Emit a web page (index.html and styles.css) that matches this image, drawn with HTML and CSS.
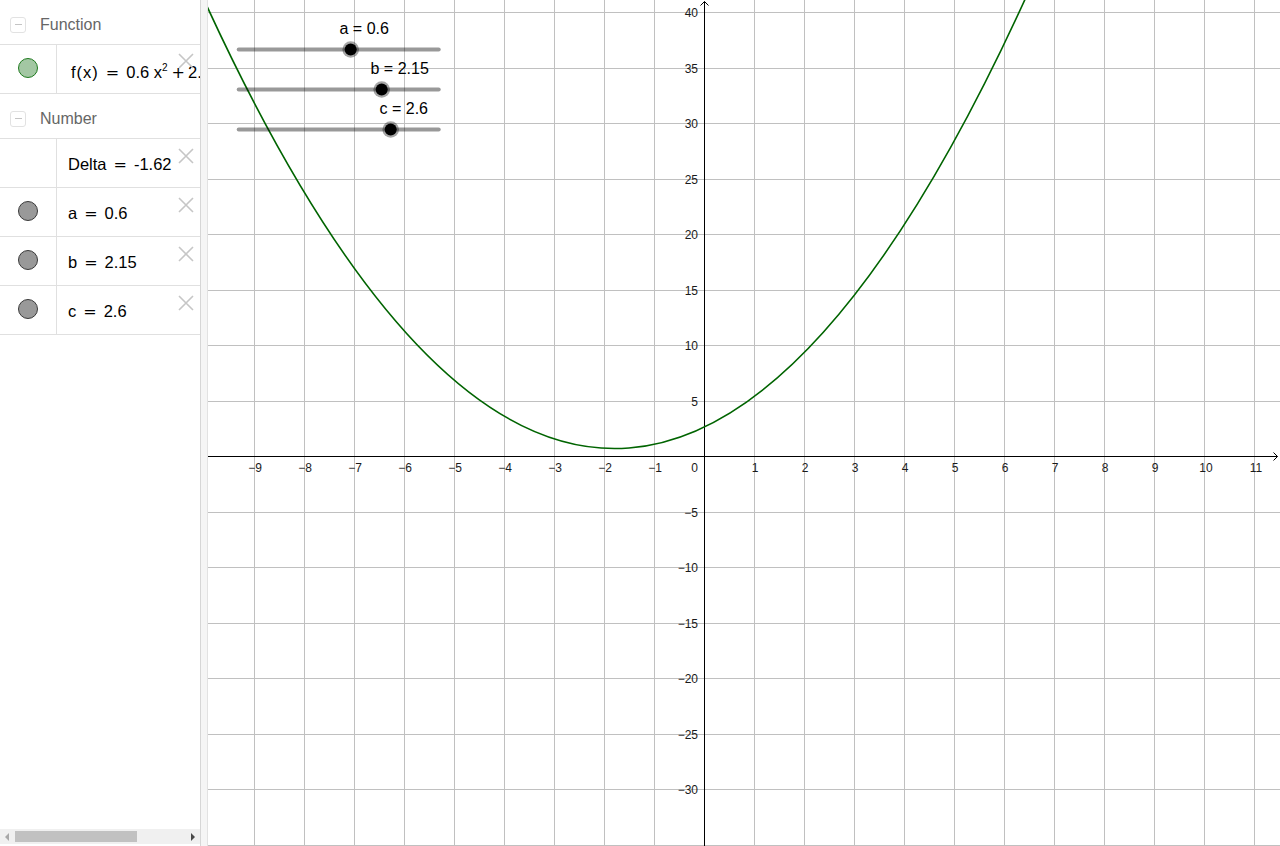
FILE: index.html
```html
<!DOCTYPE html>
<html>
<head>
<meta charset="utf-8">
<title>Graphing</title>
<link rel="stylesheet" href="styles.css">
</head>
<body>
<div class="app">
  <aside class="algebra">
    <div class="group">
      <span class="toggle"><span class="toggle-bar"></span></span>
      <span class="group-title">Function</span>
    </div>
    <div class="item">
      <div class="marble-col"><span class="marble marble-green"></span></div>
      <div class="content content-fn"><span class="math"><span class="fname">f(x)</span><span class="mo">=</span>0.6 x<sup class="sup">2</sup><span class="mo mo-bin">+</span>2.15 x<span class="mo mo-bin">+</span>2.6</span></div>
      <span class="del"><svg width="16" height="16" viewBox="0 0 16 16"><path d="M1 1L15 15M15 1L1 15"/></svg></span>
    </div>
    <div class="group">
      <span class="toggle"><span class="toggle-bar"></span></span>
      <span class="group-title">Number</span>
    </div>
    <div class="item">
      <div class="marble-col"></div>
      <div class="content"><span class="math">Delta<span class="mo">=</span>-1.62</span></div>
      <span class="del del-low"><svg width="16" height="16" viewBox="0 0 16 16"><path d="M1 1L15 15M15 1L1 15"/></svg></span>
    </div>
    <div class="item">
      <div class="marble-col"><span class="marble marble-gray"></span></div>
      <div class="content"><span class="math">a<span class="mo">=</span>0.6</span></div>
      <span class="del del-low"><svg width="16" height="16" viewBox="0 0 16 16"><path d="M1 1L15 15M15 1L1 15"/></svg></span>
    </div>
    <div class="item">
      <div class="marble-col"><span class="marble marble-gray"></span></div>
      <div class="content"><span class="math">b<span class="mo">=</span>2.15</span></div>
      <span class="del del-low"><svg width="16" height="16" viewBox="0 0 16 16"><path d="M1 1L15 15M15 1L1 15"/></svg></span>
    </div>
    <div class="item">
      <div class="marble-col"><span class="marble marble-gray"></span></div>
      <div class="content"><span class="math">c<span class="mo">=</span>2.6</span></div>
      <span class="del del-low"><svg width="16" height="16" viewBox="0 0 16 16"><path d="M1 1L15 15M15 1L1 15"/></svg></span>
    </div>
    <div class="hscroll">
      <span class="arrow-left"></span>
      <span class="thumb"></span>
      <span class="arrow-right"></span>
    </div>
  </aside>
  <div class="splitter"></div>
  <main class="graphics">
    <svg class="plot" width="1072" height="846" viewBox="208 0 1072 846">
      <path class="grid" d="M254.5 0V846M304.5 0V846M354.5 0V846M404.5 0V846M454.5 0V846M504.5 0V846M554.5 0V846M604.5 0V846M654.5 0V846M754.5 0V846M804.5 0V846M854.5 0V846M904.5 0V846M954.5 0V846M1004.5 0V846M1054.5 0V846M1104.5 0V846M1154.5 0V846M1204.5 0V846M1254.5 0V846"/>
      <path class="grid" d="M208 12.5H1280M208 68.5H1280M208 123.5H1280M208 179.5H1280M208 234.5H1280M208 290.5H1280M208 345.5H1280M208 401.5H1280M208 512.5H1280M208 567.5H1280M208 623.5H1280M208 678.5H1280M208 734.5H1280M208 789.5H1280M208 845.5H1280"/>
      <path class="axis" d="M208 456.5H1277.5M1273.5 452.5L1277.5 456.5L1273.5 460.5M704.5 846V1.5M700.5 5.5L704.5 1.5L708.5 5.5"/>
      <g class="tick tick-x">
        <text x="255" y="472">−9</text>
        <text x="305" y="472">−8</text>
        <text x="355" y="472">−7</text>
        <text x="405" y="472">−6</text>
        <text x="455" y="472">−5</text>
        <text x="505" y="472">−4</text>
        <text x="555" y="472">−3</text>
        <text x="605" y="472">−2</text>
        <text x="655" y="472">−1</text>
        <text x="755" y="472">1</text>
        <text x="805" y="472">2</text>
        <text x="855" y="472">3</text>
        <text x="905" y="472">4</text>
        <text x="955" y="472">5</text>
        <text x="1005" y="472">6</text>
        <text x="1055" y="472">7</text>
        <text x="1105" y="472">8</text>
        <text x="1155" y="472">9</text>
        <text x="1206" y="472">10</text>
        <text x="1256" y="472">11</text>
      </g>
      <g class="tick tick-y">
        <text x="698" y="472">0</text>
        <text x="698" y="17">40</text>
        <text x="698" y="73">35</text>
        <text x="698" y="128">30</text>
        <text x="698" y="184">25</text>
        <text x="698" y="239">20</text>
        <text x="698" y="295">15</text>
        <text x="698" y="350">10</text>
        <text x="698" y="406">5</text>
        <text x="698" y="517">−5</text>
        <text x="698" y="572">−10</text>
        <text x="698" y="628">−15</text>
        <text x="698" y="683">−20</text>
        <text x="698" y="739">−25</text>
        <text x="698" y="794">−30</text>
      </g>
      <path class="curve" d="M179 -56.54Q629 987.41 1079 -126.47"/>
      <g class="slider">
        <line class="slider-line" x1="238.7" y1="49.5" x2="438.7" y2="49.5"/>
        <circle class="knob-ring" cx="350.7" cy="49.5" r="8.3"/>
        <circle class="knob" cx="350.7" cy="49.5" r="6"/>
        <text class="slider-label" x="339.5" y="33.5">a = 0.6</text>
      </g>
      <g class="slider">
        <line class="slider-line" x1="238.7" y1="89.5" x2="438.7" y2="89.5"/>
        <circle class="knob-ring" cx="381.7" cy="89.5" r="8.3"/>
        <circle class="knob" cx="381.7" cy="89.5" r="6"/>
        <text class="slider-label" x="370.5" y="73.5">b = 2.15</text>
      </g>
      <g class="slider">
        <line class="slider-line" x1="238.7" y1="129.5" x2="438.7" y2="129.5"/>
        <circle class="knob-ring" cx="390.7" cy="129.5" r="8.3"/>
        <circle class="knob" cx="390.7" cy="129.5" r="6"/>
        <text class="slider-label" x="379.5" y="113.5">c = 2.6</text>
      </g>
    </svg>
  </main>
</div>
</body>
</html>
```

FILE: styles.css
```css
* { box-sizing: border-box; }
html, body {
  margin: 0;
  padding: 0;
  width: 1280px;
  height: 846px;
  overflow: hidden;
  background: #ffffff;
  font-family: "Liberation Sans", Arial, sans-serif;
}
.app {
  display: flex;
  width: 1280px;
  height: 846px;
}
.algebra {
  width: 201px;
  flex: 0 0 201px;
  height: 846px;
  border-right: 1px solid #d6d6d6;
  display: flex;
  flex-direction: column;
  background: #ffffff;
}
.group {
  height: 45px;
  flex: 0 0 45px;
  padding-top: 5px;
  padding-left: 10px;
  display: flex;
  align-items: center;
  border-bottom: 1px solid #e0e0e0;
}
.toggle {
  width: 16px;
  height: 16px;
  border: 1px solid #e2e2e2;
  border-radius: 3px;
  display: flex;
  align-items: center;
  justify-content: center;
}
.toggle-bar {
  width: 7px;
  height: 1.5px;
  background: #c4c4c4;
}
.group-title {
  margin-left: 14px;
  font-size: 16px;
  color: #666666;
}
.item {
  position: relative;
  height: 49px;
  flex: 0 0 49px;
  display: flex;
  border-bottom: 1px solid #e0e0e0;
}
.marble-col {
  width: 57px;
  flex: 0 0 57px;
  border-right: 1px solid #e0e0e0;
  display: flex;
  justify-content: center;
  align-items: flex-start;
  padding-top: 13px;
  padding-right: 1px;
}
.marble {
  width: 20px;
  height: 20px;
  border-radius: 50%;
}
.marble-green {
  background: #a3c7a3;
  border: 1px solid #1f7a1f;
}
.marble-gray {
  background: #999999;
  border: 1px solid #3a3a3a;
}
.content {
  flex: 1;
  min-width: 0;
  overflow: hidden;
  white-space: nowrap;
  padding-left: 11px;
  padding-top: 15px;
  font-size: 16.5px;
  line-height: 21px;
  color: #000000;
}
.content-fn {
  padding-left: 14px;
  padding-top: 17px;
}
.fname {
  letter-spacing: 1px;
}
.mo {
  font-family: "DejaVu Sans", sans-serif;
  font-size: 16px;
  margin: 0 7px;
}
.mo-bin {
  margin: 0 3px 0 4px;
}
.sup {
  font-size: 10px;
  vertical-align: 7px;
  line-height: 0;
}
.del {
  position: absolute;
  right: 6px;
  top: 8px;
  width: 16px;
  height: 16px;
  display: block;
}
.del-low { top: 9px; }
.del svg { display: block; }
.del path {
  stroke: #c6c6c6;
  stroke-width: 1.6;
  fill: none;
}
.hscroll {
  margin-top: auto;
  margin-bottom: 2px;
  height: 15px;
  flex: 0 0 15px;
  background: #f0f0f0;
  display: flex;
  align-items: center;
}
.arrow-left {
  width: 0;
  height: 0;
  margin-left: 5px;
  border-right: 4px solid #a8a8a8;
  border-top: 4px solid transparent;
  border-bottom: 4px solid transparent;
}
.thumb {
  margin-left: 6px;
  width: 122px;
  height: 11px;
  background: #c1c1c1;
}
.arrow-right {
  width: 0;
  height: 0;
  margin-left: auto;
  margin-right: 5px;
  border-left: 4px solid #4a4a4a;
  border-top: 4px solid transparent;
  border-bottom: 4px solid transparent;
}
.splitter {
  width: 7px;
  flex: 0 0 7px;
  height: 846px;
  background: #f5f5f5;
  border-right: 1px solid #e2e2e2;
}
.graphics {
  flex: 1;
  height: 846px;
  overflow: hidden;
}
.plot {
  display: block;
}
.grid {
  stroke: #c0c0c0;
  stroke-width: 1;
  fill: none;
}
.axis {
  stroke: #000000;
  stroke-width: 1;
  fill: none;
}
.tick {
  font-family: "Liberation Sans", Arial, sans-serif;
  font-size: 12px;
  fill: #1a1a1a;
}
.tick-x { text-anchor: middle; }
.tick-y { text-anchor: end; }
.curve {
  stroke: #006400;
  stroke-width: 1.6;
  fill: none;
}
.slider-line {
  stroke: #000000;
  stroke-opacity: 0.4;
  stroke-width: 4;
  stroke-linecap: round;
}
.knob-ring {
  fill: #000000;
  fill-opacity: 0.35;
}
.knob {
  fill: #000000;
}
.slider-label {
  font-family: "Liberation Sans", Arial, sans-serif;
  font-size: 16px;
  fill: #000000;
}
```
